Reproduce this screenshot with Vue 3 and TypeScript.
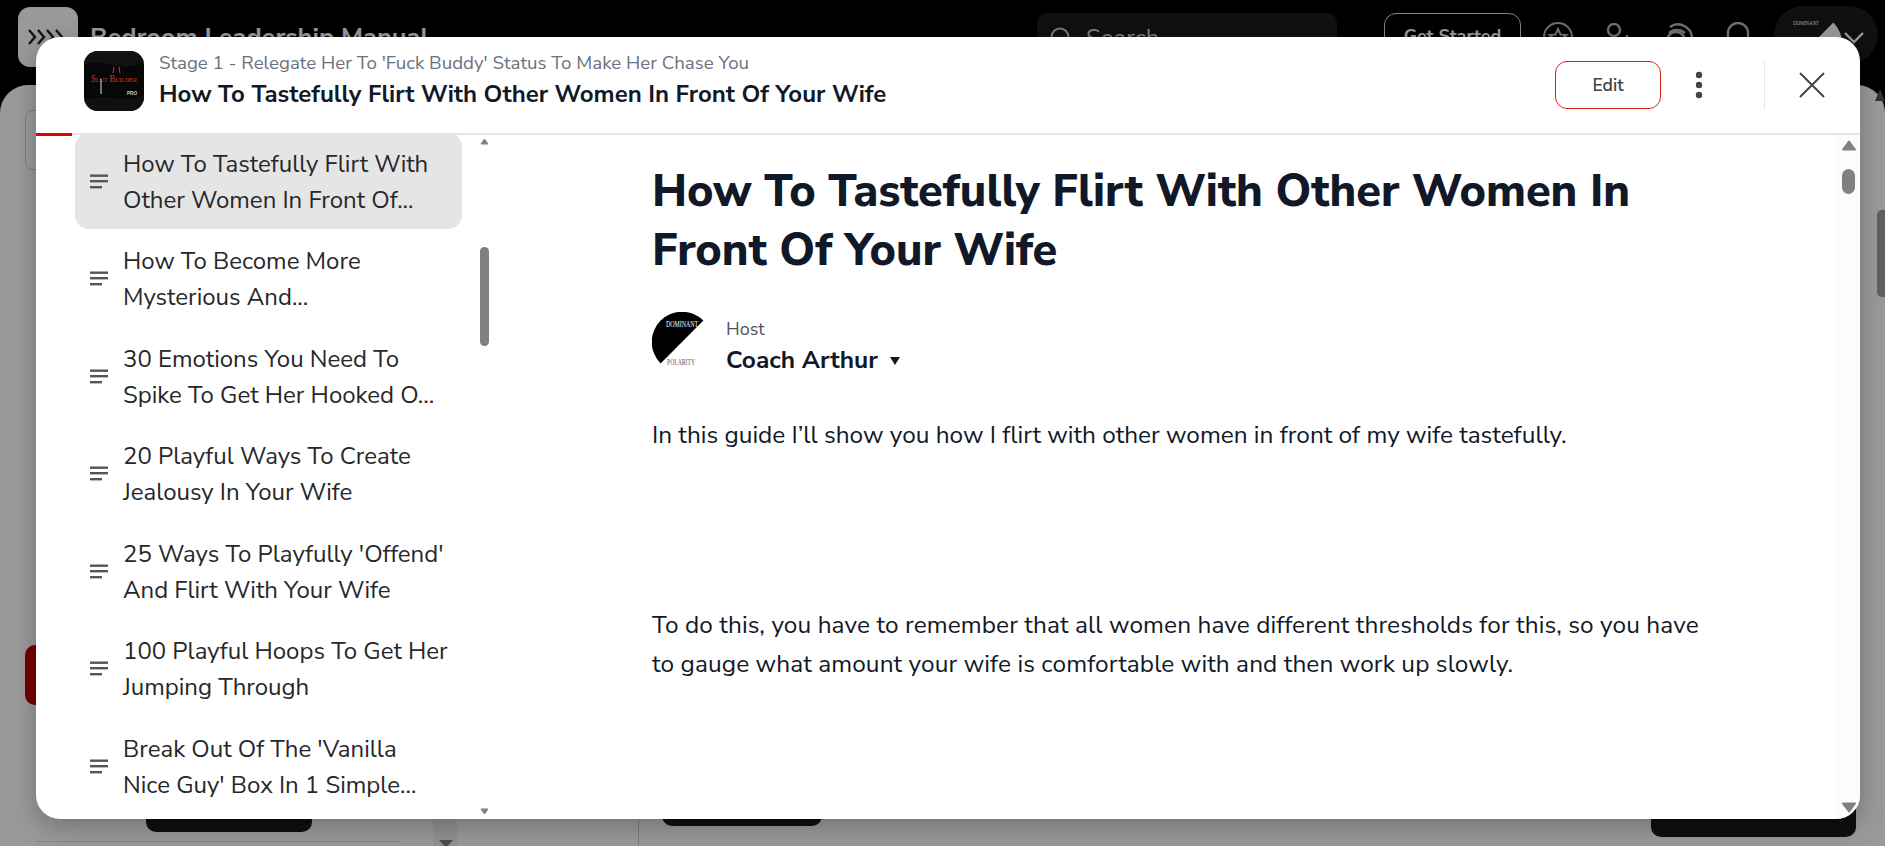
<script setup lang="ts">
const lessons: string[][] = [
  ['How To Tastefully Flirt With', 'Other Women In Front Of...'],
  ['How To Become More', 'Mysterious And...'],
  ['30 Emotions You Need To', 'Spike To Get Her Hooked O...'],
  ['20 Playful Ways To Create', 'Jealousy In Your Wife'],
  ["25 Ways To Playfully 'Offend'", 'And Flirt With Your Wife'],
  ['100 Playful Hoops To Get Her', 'Jumping Through'],
  ["Break Out Of The 'Vanilla", "Nice Guy' Box In 1 Simple..."],
]
</script>

<template>
  <div class="page">
    <header class="topbar">
      <div class="menu-btn">
        <svg width="44" height="20" viewBox="0 0 44 20" fill="none" stroke="#222" stroke-width="2.4"><path d="M3 3l6 7-6 7M12 3l6 7-6 7M21 3l6 7-6 7M30 3l6 7-6 7" /></svg>
      </div>
      <div class="app-title">Bedroom Leadership Manual</div>
      <div class="search">
        <svg width="22" height="22" viewBox="0 0 22 22" fill="none" stroke="#ccc" stroke-width="2"><circle cx="10" cy="10" r="8.500" /><path d="M16 16l5 5" /></svg>
        <span>Search</span>
      </div>
      <div class="started">Get Started</div>
      <div class="top-icons">
        <svg width="30" height="30" viewBox="0 0 30 30" fill="none" stroke="#bbb" stroke-width="2"><circle cx="15" cy="15" r="14" /><path d="M15 7l2.500 5.500 6 .5-4.500 4 1.500 6-5.500-3.200-5.500 3.200 1.500-6-4.500-4 6-.5z" /></svg>
        <svg width="30" height="30" viewBox="0 0 30 30" fill="none" stroke="#bbb" stroke-width="2.400"><circle cx="11" cy="8" r="6" /><path d="M2 28c0-9 18-9 18 0M24 13v8M20 17h8" /></svg>
        <svg width="30" height="30" viewBox="0 0 30 30" fill="none" stroke="#bbb" stroke-width="2.400"><circle cx="13" cy="19" r="9" /><path d="M7 5a14 14 0 0 1 22 12M6 11a12 12 0 0 1 16 0" /></svg>
        <svg width="30" height="30" viewBox="0 0 30 30" fill="none" stroke="#bbb" stroke-width="2.400"><path d="M5 26V11a10 10 0 0 1 20 0v15z" /></svg>
      </div>
      <div class="profile">
        <svg class="profile-avatar" width="60" height="60" viewBox="0 0 60 60">
          <path d="M51.400 8.600A30.200 30.200 0 0 1 8.600 51.400z" fill="#fff" />
          <text x="11" y="11" class="pa-top" textLength="26" lengthAdjust="spacingAndGlyphs">DOMINANT</text>
        </svg>
        <svg class="chev" width="20" height="12" viewBox="0 0 20 12" fill="none" stroke="#fff" stroke-width="2.400"><path d="M1 1l9 9 9-9" /></svg>
      </div>
    </header>

    <div class="behind">
      <div class="behind-left">
        <div class="behind-outline"></div>
        <div class="behind-red"></div>
        <div class="behind-black"></div>
        <div class="behind-rule"></div>
      </div>
      <div class="behind-strip">
        <span class="behind-arrow"></span>
      </div>
      <div class="behind-main">
        <div class="behind-black small"></div>
        <div class="behind-divider"></div>
        <div class="behind-black wide"></div>
        <span class="behind-up"></span>
        <span class="behind-thumb"></span>
      </div>
    </div>

    <div class="scrim"></div>

    <section class="modal">
      <div class="modal-head">
        <div class="logo">
          <svg width="60" height="60" viewBox="0 0 60 60">
            <rect width="60" height="60" fill="#070707" />
            <path d="M0 14C18 6 38 24 60 10V0H0z" fill="#121212" />
            <path d="M0 50C20 40 40 54 60 44V60H0z" fill="#101010" />
            <path d="M29 22l1 -6M36 22l-1 -6" stroke="#d63a2a" stroke-width="1" />
            <text x="7" y="31" class="logo-word" textLength="46" lengthAdjust="spacingAndGlyphs">Slut Builder</text>
            <text x="43" y="44" class="logo-pro" textLength="10" lengthAdjust="spacingAndGlyphs">PRO</text>
            <path d="M17 28v15" stroke="#ddd" stroke-width="1" />
          </svg>
        </div>
        <div class="head-text">
          <div class="stage">Stage 1 - Relegate Her To 'Fuck Buddy' Status To Make Her Chase You</div>
          <div class="head-title">How To Tastefully Flirt With Other Women In Front Of Your Wife</div>
        </div>
        <button class="edit">Edit</button>
        <svg class="dots" width="8" height="28" viewBox="0 0 8 28" fill="#444"><circle cx="4" cy="4" r="3.200" /><circle cx="4" cy="14" r="3.200" /><circle cx="4" cy="24" r="3.200" /></svg>
        <div class="head-sep"></div>
        <svg class="close" width="26" height="26" viewBox="0 0 26 26" fill="none" stroke="#444" stroke-width="2"><path d="M1 1l24 24M25 1L1 25" /></svg>
      </div>
      <div class="progress"><div class="progress-fill"></div></div>

      <div class="modal-body">
        <aside class="side">
          <div class="list">
            <div v-for="(lesson, i) in lessons" :key="i" class="item" :class="{ active: i === 0 }">
              <svg class="lines" width="18" height="15" viewBox="0 0 18 15" fill="#555"><rect width="18" height="2.400" y="0.500" /><rect width="18" height="2.400" y="6" /><rect width="12" height="2.400" y="12" /></svg>
              <div class="item-text">
                <div v-for="line in lesson" :key="line">{{ line }}</div>
              </div>
            </div>
          </div>
          <div class="side-scroll">
            <svg class="arrow up" width="9" height="7" viewBox="0 0 9 7" fill="#808080" stroke="#808080" stroke-linejoin="round"><path d="M4.500 1L8 6H1z" /></svg>
            <span class="thumb"></span>
            <svg class="arrow down" width="9" height="7" viewBox="0 0 9 7" fill="#808080" stroke="#808080" stroke-linejoin="round"><path d="M1 1h7L4.500 6z" /></svg>
          </div>
        </aside>

        <main class="content">
          <h1>How To Tastefully Flirt With Other Women In Front Of Your Wife</h1>
          <div class="host">
            <svg class="host-logo" width="60" height="60" viewBox="0 0 60 60">
              <path d="M51.400 8.600A30.200 30.200 0 0 0 8.600 51.400z" fill="#000" />
              <text x="14" y="15" class="hl-top" textLength="32" lengthAdjust="spacingAndGlyphs">DOMINANT</text>
              <text x="15" y="53" class="hl-bot" textLength="28" lengthAdjust="spacingAndGlyphs">POLARITY</text>
            </svg>
            <div class="host-text">
              <div class="host-label">Host</div>
              <div class="host-name">Coach Arthur <span class="caret"></span></div>
            </div>
          </div>
          <p class="p1">In this guide I’ll show you how I flirt with other women in front of my wife tastefully.</p>
          <p class="p2">To do this, you have to remember that all women have different thresholds for this, so you have to gauge what amount your wife is comfortable with and then work up slowly.</p>
        </main>

        <div class="main-scroll">
          <svg class="arrow up" width="14" height="11" viewBox="0 0 14 11" fill="#808080" stroke="#808080" stroke-width="2" stroke-linejoin="round"><path d="M7 1.500L13 9.500H1z" /></svg>
          <span class="thumb"></span>
          <svg class="arrow down" width="14" height="11" viewBox="0 0 14 11" fill="#808080" stroke="#808080" stroke-width="2" stroke-linejoin="round"><path d="M1 1.500h12L7 9.500z" /></svg>
        </div>
      </div>
    </section>
  </div>
</template>

<style>
html, body { margin: 0; height: 100%; overflow: hidden; background: #000; }
</style>

<style scoped>
* { box-sizing: border-box; }
.page {
  position: relative;
  width: 1885px;
  height: 846px;
  overflow: hidden;
  font-family: "Nunito Sans", Lato, "Open Sans", sans-serif;
  background: #000;
}
.topbar {
  display: flex;
  align-items: flex-start;
  height: 85px;
  padding: 7px 0 0 18px;
  background: #000;
}
.menu-btn {
  width: 60px;
  height: 60px;
  flex: none;
  border-radius: 12px;
  background: #fff;
  display: flex;
  align-items: center;
  justify-content: center;
  overflow: hidden;
}
.app-title {
  margin: 13px 0 0 12px;
  width: 947px;
  flex: none;
  font-size: 25.400px;
  font-weight: 700;
  color: #fff;
}
.search {
  width: 300px;
  height: 50px;
  flex: none;
  margin-top: 6px;
  padding: 0 13px;
  border-radius: 10px;
  background: #1c1c1c;
  display: flex;
  align-items: center;
  gap: 14px;
  color: #ccc;
  font-size: 24px;
}
.started {
  width: 137px;
  height: 50px;
  flex: none;
  margin: 6px 0 0 47px;
  border: 1px solid #ddd;
  border-radius: 12px;
  color: #fff;
  font-weight: 700;
  font-size: 18px;
  text-align: center;
  line-height: 44px;
}
.top-icons {
  display: flex;
  flex: none;
  gap: 30px;
  margin: 15px 0 0 22px;
}
.profile {
  position: relative;
  flex: none;
  width: 104px;
  height: 58px;
  margin: -1px 0 0 21px;
  border-radius: 29px;
  background: #1c1c1c;
  overflow: hidden;
}
.profile-avatar { position: absolute; left: 8px; top: 8px; }
.pa-top { font-family: "Liberation Serif", serif; font-size: 7px; fill: #fff; }
.chev { position: absolute; left: 70px; top: 26px; }
.behind {
  display: flex;
  height: 761px;
  background: #fff;
  border-radius: 28px 28px 0 0;
}
.behind-left {
  position: relative;
  width: 433px;
  flex: none;
}
.behind-outline { position: absolute; left: 25px; top: 25px; width: 30px; height: 60px; border: 1px solid #dcc; border-radius: 8px; }
.behind-red { position: absolute; left: 25px; top: 560px; width: 60px; height: 60px; background: #bf0000; border-radius: 10px; }
.behind-black { position: absolute; background: #1a1a1a; border-radius: 10px; }
.behind-left .behind-black { left: 146px; top: 700px; width: 166px; height: 47px; }
.behind-rule { position: absolute; left: 35px; right: 33px; top: 756px; height: 1px; background: #e4e4e4; }
.behind-strip { position: relative; width: 24px; flex: none; background: #f2f2f2; }
.behind-arrow {
  position: absolute;
  left: 6px;
  top: 755px;
  width: 0;
  height: 0;
  border-left: 7px solid transparent;
  border-right: 7px solid transparent;
  border-top: 8px solid #808080;
}
.behind-main { position: relative; flex: 1; border-left: 0; }
.small { left: 205px; top: 700px; width: 160px; height: 41px; }
.behind-divider { position: absolute; left: 181px; top: 700px; bottom: 0; width: 1px; background: #d0d0d0; }
.wide { right: 29px; top: 700px; width: 205px; height: 52px; }
.behind-up {
  position: absolute;
  right: 0;
  top: 4px;
  width: 0;
  height: 0;
  border-left: 5px solid transparent;
  border-right: 5px solid transparent;
  border-bottom: 12px solid #555;
}
.behind-thumb { position: absolute; right: 0; top: 125px; width: 8px; height: 87px; border-radius: 5px 0 0 5px; background: #a0a0a0; }
.scrim {
  position: absolute;
  inset: 0;
  background: rgba(0, 0, 0, 0.4);
}
.modal {
  position: absolute;
  left: 36px;
  top: 37px;
  width: 1824px;
  height: 782px;
  border-radius: 24px;
  overflow: hidden;
  background: #fff;
  box-shadow: 0 8px 24px rgba(0, 0, 0, 0.25);
  display: flex;
  flex-direction: column;
}
.modal-head {
  display: flex;
  align-items: center;
  height: 96px;
  flex: none;
  padding: 0 35px 0 48px;
}
.logo { width: 60px; height: 60px; border-radius: 14px; overflow: hidden; flex: none; margin-bottom: 8px; }
.logo-word { font-family: "Liberation Serif", serif; font-size: 10px; font-variant: small-caps; fill: #d63a2a; }
.logo-pro { font-family: "Liberation Sans", sans-serif; font-size: 6px; font-weight: 700; fill: #ccc; }
.head-text { flex: 1; margin: 0 0 9px 15px; }
.stage { font-size: 18.700px; line-height: 26px; color: #6b7280; }
.head-title { font-size: 24px; font-weight: 700; line-height: 36px; color: #111827; }
.edit {
  width: 106px;
  height: 48px;
  border: 1px solid #d9230f;
  border-radius: 12px;
  background: #fff;
  color: #444;
  font-family: inherit;
  font-size: 17.500px;
  font-weight: 600;
}
.dots { margin-left: 34px; }
.head-sep { width: 1px; height: 48px; margin-left: 61px; background: #e5e7eb; }
.close { margin-left: 34px; }
.progress { position: relative; height: 2px; background: #e5e5e5; flex: none; }
.progress-fill { position: absolute; left: 0; top: 0; width: 36px; height: 3px; background: #e00000; z-index: 2; }
.modal-body { position: relative; flex: 1; display: flex; min-height: 0; margin-top: -2px; }
.side {
  position: relative;
  width: 456px;
  flex: none;
  overflow: hidden;
}
.list { padding: 0 0 0 39px; }
.item {
  width: 387px;
  height: 96px;
  margin-bottom: 1.600px;
  padding: 0 15px;
  display: flex;
  align-items: center;
  border-radius: 14px;
}
.item.active { background: #e5e5e5; }
.lines { flex: none; }
.item-text {
  margin-left: 15px;
  padding-top: 1px;
  font-size: 24px;
  line-height: 36px;
  color: #27272a;
  white-space: nowrap;
}
.side-scroll {
  position: absolute;
  left: 444px;
  top: 0;
  bottom: 0;
  width: 9px;
}
.main-scroll {
  position: absolute;
  right: 0;
  top: 2px;
  bottom: 0;
  width: 23px;
  background: #fcfcfc;
}
.arrow { position: absolute; left: 0; }
.arrow.up { top: 5px; }
.arrow.down { bottom: 4px; }
.thumb {
  position: absolute;
  left: 0;
  top: 114px;
  width: 9px;
  height: 99px;
  border-radius: 5px;
  background: #808080;
}
.main-scroll .arrow { left: 5px; }
.main-scroll .arrow.up { top: 5px; }
.main-scroll .arrow.down { bottom: 6px; }
.main-scroll .thumb { left: 5px; top: 34px; width: 13px; height: 25px; border-radius: 7px; }
.content {
  flex: 1;
  padding: 29px 154px 0 160px;
  color: #111827;
  min-width: 0;
}
h1 {
  margin: 0;
  font-size: 45px;
  line-height: 59px;
  font-weight: 800;
}
.host { display: flex; align-items: flex-start; margin-top: 32px; height: 60px; }
.host-logo { flex: none; }
.hl-top { font-family: "Liberation Serif", serif; font-size: 8px; fill: #fff; }
.hl-bot { font-family: "Liberation Serif", serif; font-size: 8px; fill: #555; }
.host-text { margin: 4px 0 0 14px; }
.host-label { font-size: 18px; line-height: 26px; color: #4b5563; }
.host-name { font-size: 24.500px; font-weight: 700; line-height: 36px; }
.caret {
  display: inline-block;
  width: 0; height: 0;
  margin-left: 6px;
  vertical-align: 3px;
  border-left: 5px solid transparent;
  border-right: 5px solid transparent;
  border-top: 8px solid #111827;
}
p { margin: 0; font-size: 24.400px; line-height: 38.400px; }
.p1 { margin-top: 44px; }
.p2 { margin-top: 152px; letter-spacing: 0.1px; }
</style>
